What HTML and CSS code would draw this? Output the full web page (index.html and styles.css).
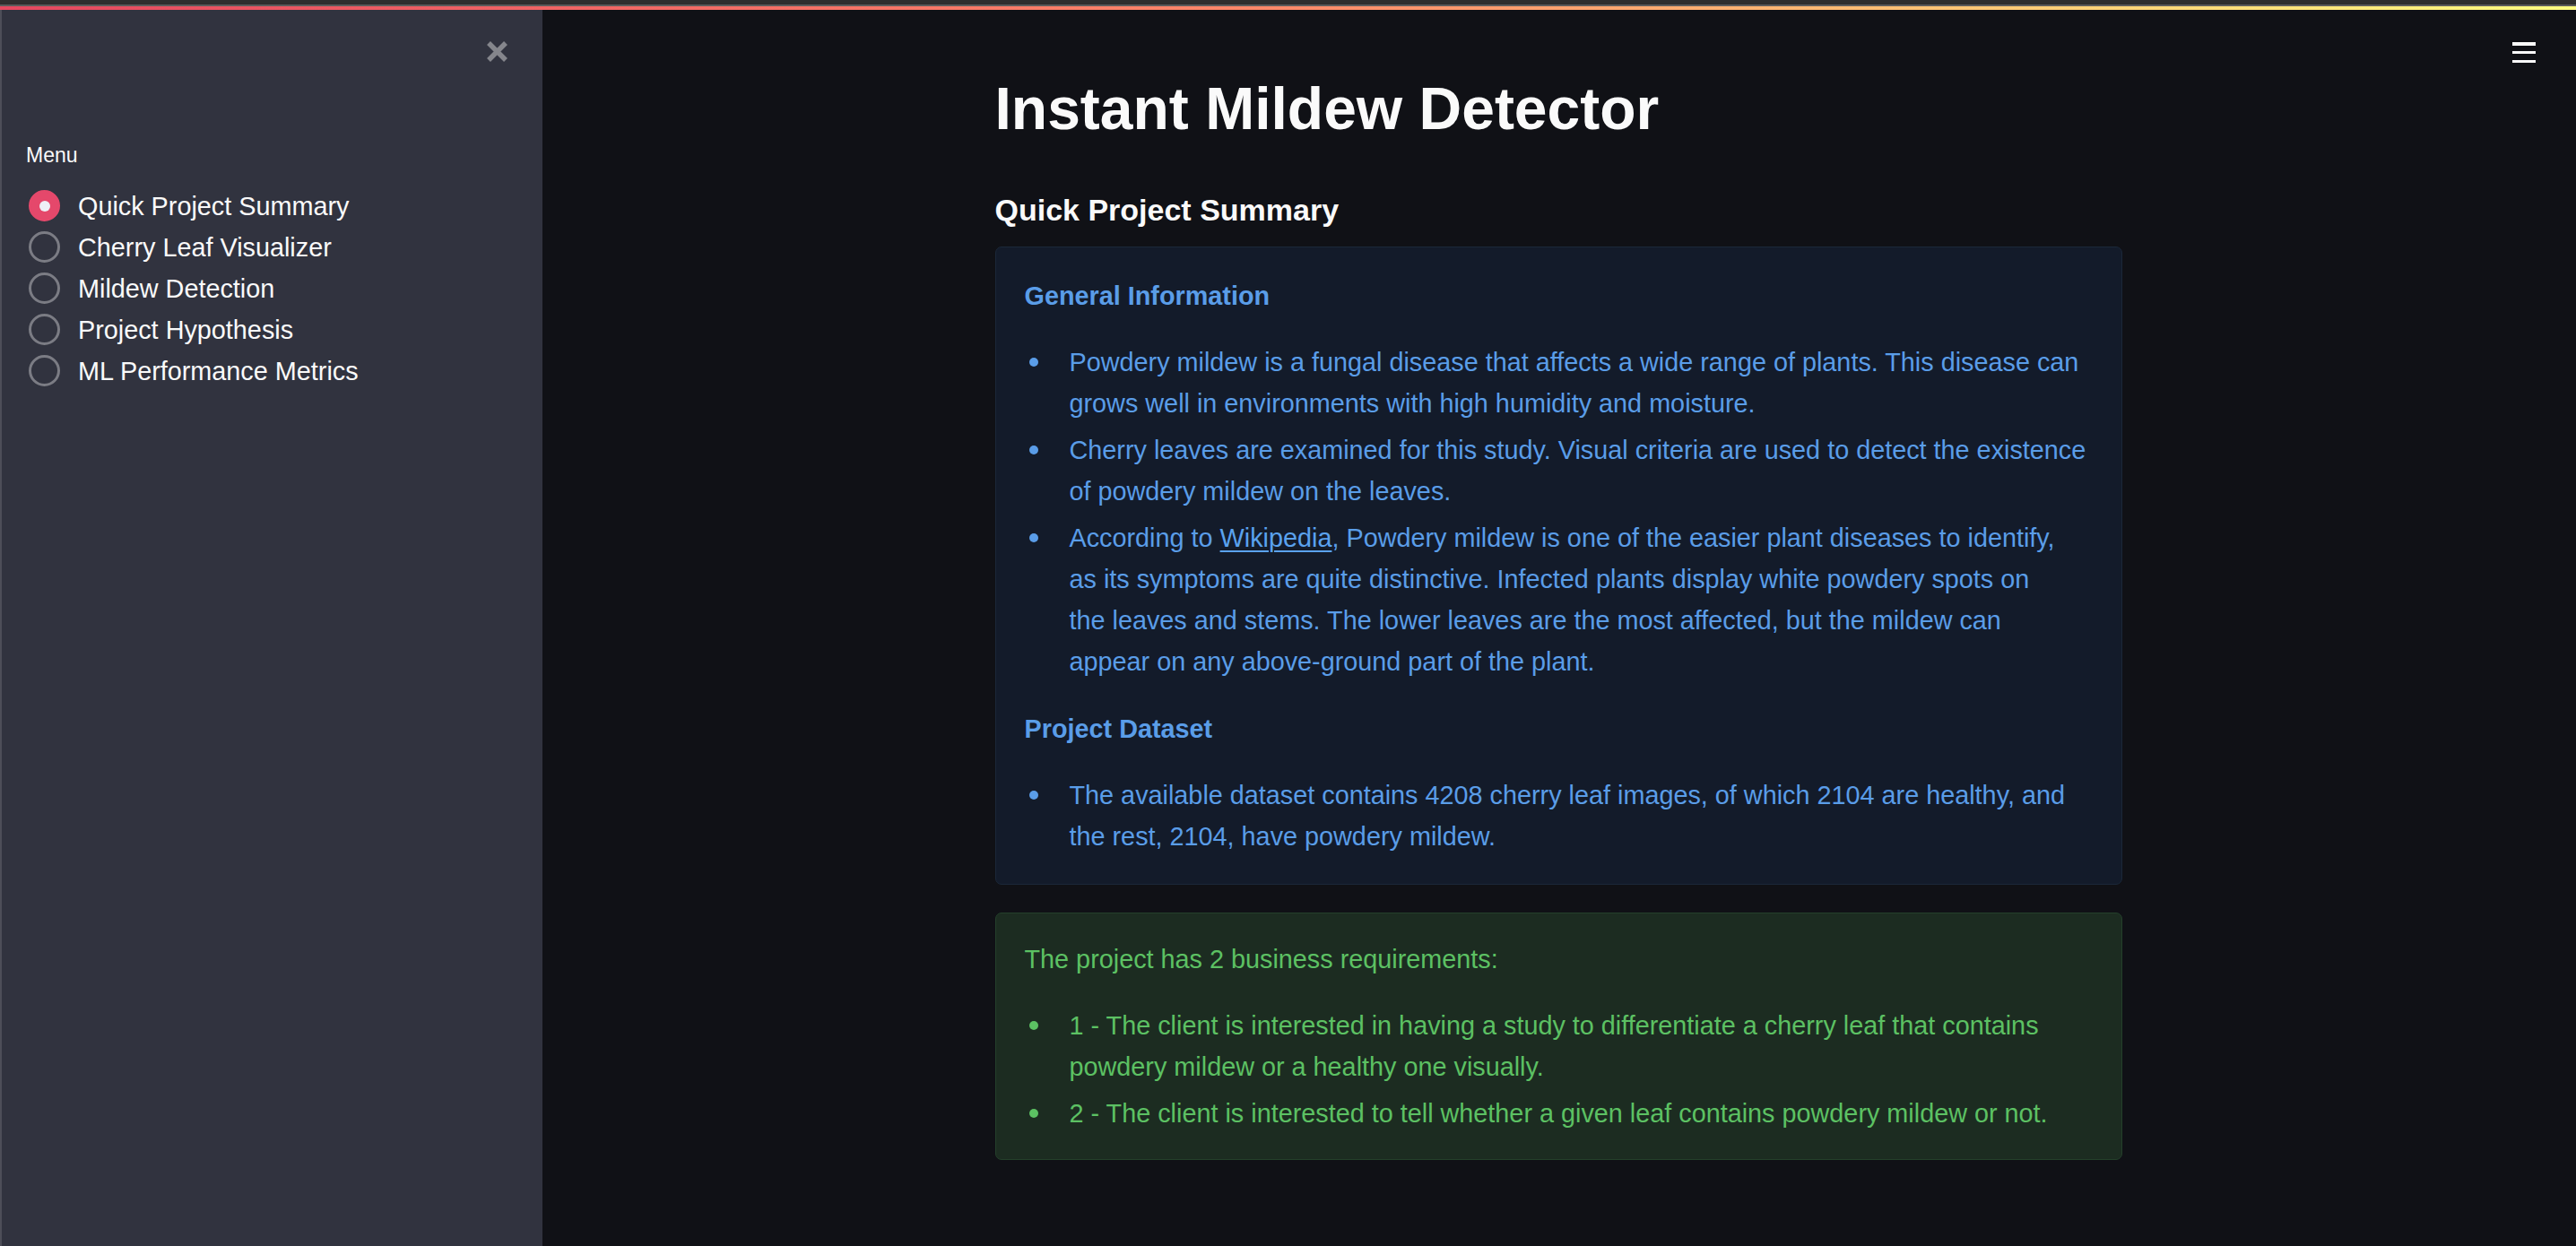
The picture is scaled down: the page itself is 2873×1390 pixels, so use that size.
FILE: index.html
```html
<!DOCTYPE html>
<html lang="en">
<head>
<meta charset="utf-8">
<title>Instant Mildew Detector</title>
<link rel="stylesheet" href="styles.css">
</head>
<body>
<div class="topbar">
  <div class="chrome"></div>
  <div class="decoration"></div>
</div>
<div class="app">
  <aside class="sidebar">
    <div class="sidebar-head">
      <button class="close" aria-label="Close sidebar">
        <svg width="25" height="25" viewBox="0 0 25 25"><path d="M3 3 L22 22 M22 3 L3 22" stroke="#85868c" stroke-width="5.5" fill="none"/></svg>
      </button>
    </div>
    <div class="menu-label">Menu</div>
    <div class="radios">
      <label class="radio selected"><span class="circle"></span><span class="radio-text">Quick Project Summary</span></label>
      <label class="radio"><span class="circle"></span><span class="radio-text">Cherry Leaf Visualizer</span></label>
      <label class="radio"><span class="circle"></span><span class="radio-text">Mildew Detection</span></label>
      <label class="radio"><span class="circle"></span><span class="radio-text">Project Hypothesis</span></label>
      <label class="radio"><span class="circle"></span><span class="radio-text">ML Performance Metrics</span></label>
    </div>
  </aside>
  <main class="main">
    <button class="hamburger" aria-label="Menu"><span></span><span></span><span></span></button>
    <div class="block">
      <h1 class="title">Instant Mildew Detector</h1>
      <h3 class="subtitle">Quick Project Summary</h3>
      <div class="alert info">
        <p class="alert-heading">General Information</p>
        <ul class="bullets">
          <li><span>Powdery mildew is a fungal disease that affects a wide range of plants. This disease can grows well in environments with high humidity and moisture.</span></li>
          <li><span>Cherry leaves are examined for this study. Visual criteria are used to detect the existence of powdery mildew on the leaves.</span></li>
          <li><span>According to <a href="#">Wikipedia</a>, Powdery mildew is one of the easier plant diseases to identify,<br>as its symptoms are quite distinctive. Infected plants display white powdery spots on<br>the leaves and stems. The lower leaves are the most affected, but the mildew can<br>appear on any above-ground part of the plant.</span></li>
        </ul>
        <p class="alert-heading">Project Dataset</p>
        <ul class="bullets">
          <li><span>The available dataset contains 4208 cherry leaf images, of which 2104 are healthy, and the rest, 2104, have powdery mildew.</span></li>
        </ul>
      </div>
      <div class="alert success">
        <p class="alert-text">The project has 2 business requirements:</p>
        <ul class="bullets">
          <li><span>1 - The client is interested in having a study to differentiate a cherry leaf that contains powdery mildew or a healthy one visually.</span></li>
          <li><span>2 - The client is interested to tell whether a given leaf contains powdery mildew or not.</span></li>
        </ul>
      </div>
    </div>
  </main>
</div>
</body>
</html>
```

FILE: styles.css
```css
* { box-sizing: border-box; }

html, body {
  margin: 0;
  padding: 0;
  height: 100%;
}

body {
  background: #101116;
  font-family: "Liberation Sans", Arial, sans-serif;
  color: #fafafa;
  overflow: hidden;
}

.topbar .chrome {
  height: 7px;
  background: #2e2e2e;
  border-bottom: 2px solid #5b5b5b;
}

.topbar .decoration {
  height: 4px;
  background: linear-gradient(90deg, #e5485f 0%, #ff8a6a 50%, #fffd80 100%);
}

.app {
  display: flex;
  height: 1379px;
}

/* Sidebar */
.sidebar {
  width: 605px;
  flex: 0 0 605px;
  background: #31333f;
  border-left: 2px solid #4d4e58;
  display: flex;
  flex-direction: column;
}

.sidebar-head {
  height: 92px;
  display: flex;
  align-items: center;
  justify-content: flex-end;
  padding-right: 38px;
}

.close {
  background: none;
  border: none;
  padding: 0;
  width: 25px;
  height: 25px;
  display: flex;
  cursor: pointer;
}

.menu-label {
  margin: 52px 0 0 27px;
  font-size: 23px;
  line-height: 36.8px;
  color: #fafafa;
}

.radios {
  margin-top: 15px;
  display: flex;
  flex-direction: column;
}

.radio {
  display: flex;
  align-items: center;
  height: 46px;
  padding-left: 30px;
  font-size: 28.8px;
  line-height: 46px;
  color: #fafafa;
}

.circle {
  width: 35px;
  height: 35px;
  border-radius: 50%;
  border: 3px solid #7b7c84;
  margin-right: 20px;
  flex: 0 0 auto;
  display: flex;
  align-items: center;
  justify-content: center;
}

.radio.selected .circle {
  background: #e5486b;
  border-color: #e5486b;
}

.radio.selected .circle::after {
  content: "";
  width: 12px;
  height: 12px;
  border-radius: 50%;
  background: #eef0f6;
}

/* Main */
.main {
  flex: 1;
  position: relative;
  padding-top: 71px;
}

.hamburger {
  position: absolute;
  top: 36px;
  right: 45px;
  width: 26px;
  height: 23px;
  padding: 0;
  background: none;
  border: none;
  display: flex;
  flex-direction: column;
  justify-content: space-between;
}

.hamburger span {
  display: block;
  height: 3.5px;
  background: #fafafa;
}

.block {
  width: 1257px;
  margin: 0 auto;
  position: relative;
  left: -1px;
}

.title {
  margin: 0;
  font-size: 66px;
  line-height: 79px;
  font-weight: 700;
  color: #fafafa;
}

.subtitle {
  margin: 53px 0 20px;
  font-size: 34px;
  line-height: 41px;
  font-weight: 700;
  color: #fafafa;
}

.alert {
  border-radius: 7px;
  border: 1px solid;
  padding: 31px 32px 24px;
  font-size: 28.8px;
  line-height: 46px;
}

.alert p {
  margin: 0 0 28px;
}

.alert-heading {
  font-weight: 700;
}

.info {
  background: #131b2a;
  border-color: #1b2839;
  color: #5a9de8;
}

.info a {
  color: #5aa2ee;
  text-decoration: underline;
  text-underline-offset: 4px;
  text-decoration-thickness: 2px;
}

.success {
  margin-top: 31px;
  background: #1c2c21;
  border-color: #24402b;
  color: #5cc163;
  padding-top: 28px;
  padding-bottom: 22px;
}

.bullets {
  list-style: none;
  margin: 0 0 29px;
  padding: 0;
}

.alert .bullets:last-child {
  margin-bottom: 0;
}

.bullets li {
  display: flex;
  margin-bottom: 6px;
}

.bullets li::before {
  content: "";
  flex: 0 0 10px;
  height: 10px;
  border-radius: 50%;
  background: currentColor;
  margin: 18px 35px 0 5px;
}

.bullets li span {
  flex: 1;
}
```
